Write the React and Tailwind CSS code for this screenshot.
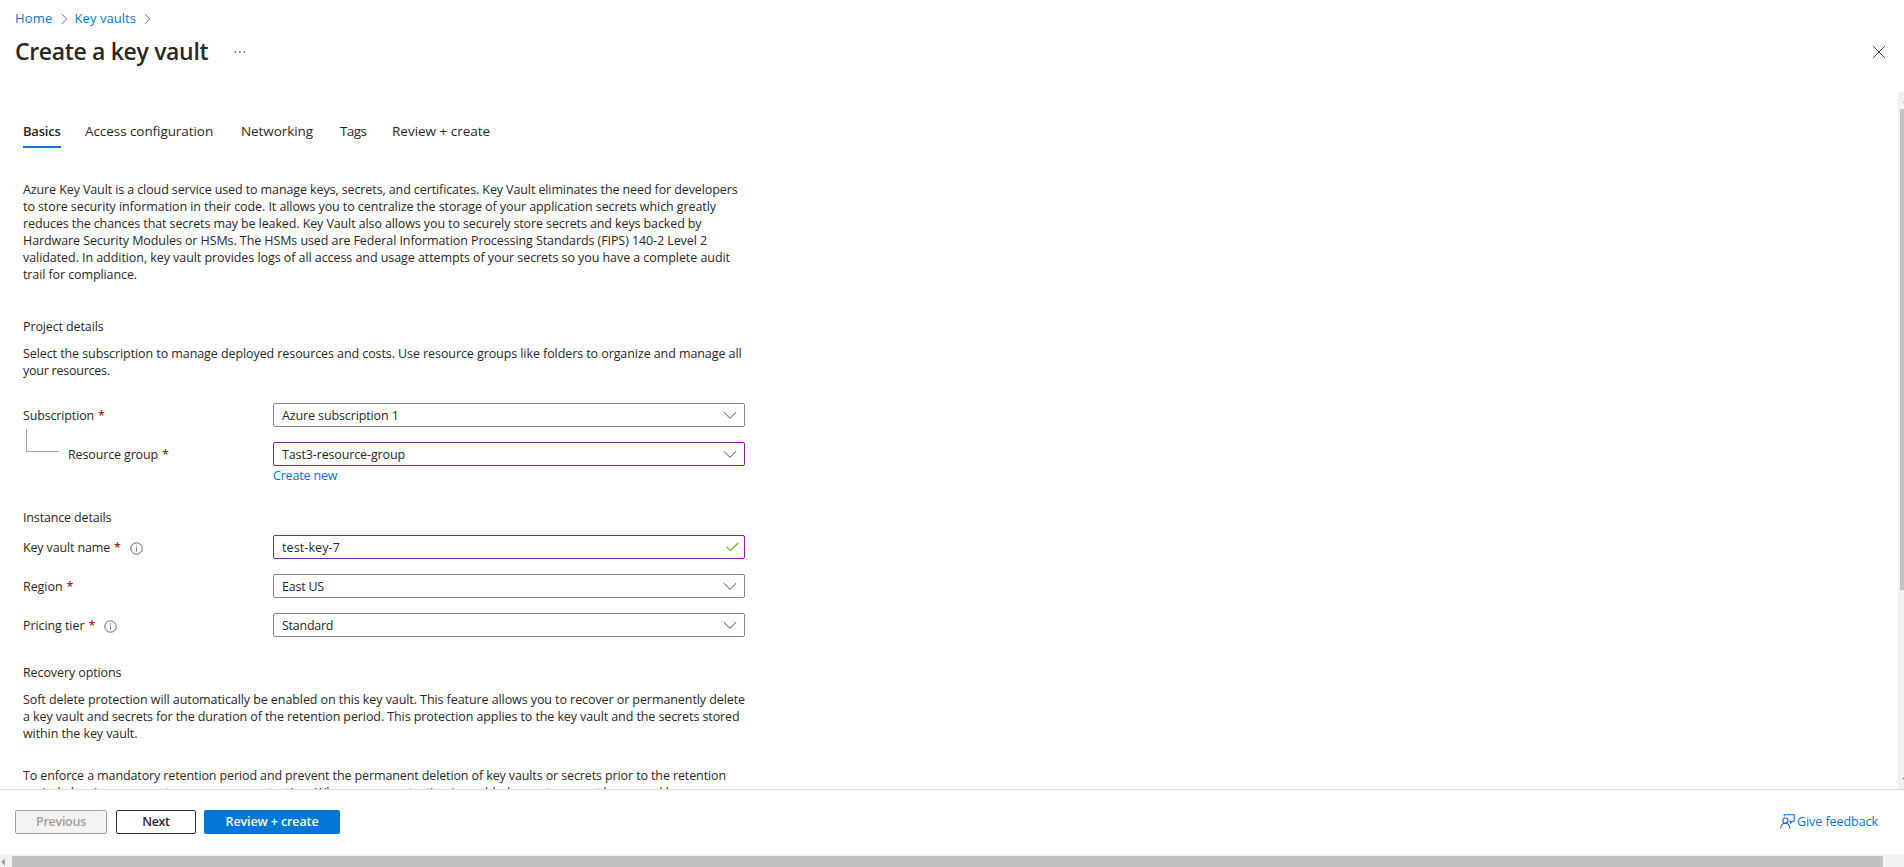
const intro = [
  ['Azure Key Vault is a cloud service used to manage keys, secrets, and certificates. Key Vault eliminates the need for developers', 'tracking-[-0.106px]'],
  ['to store security information in their code. It allows you to centralize the storage of your application secrets which greatly', 'tracking-[-0.080px]'],
  ['reduces the chances that secrets may be leaked. Key Vault also allows you to securely store secrets and keys backed by', 'tracking-[-0.109px]'],
  ['Hardware Security Modules or HSMs. The HSMs used are Federal Information Processing Standards (FIPS) 140-2 Level 2', 'tracking-[-0.085px]'],
  ['validated. In addition, key vault provides logs of all access and usage attempts of your secrets so you have a complete audit', 'tracking-[-0.065px]'],
  ['trail for compliance.', 'tracking-[-0.1px]'],
];

const project = [
  ['Select the subscription to manage deployed resources and costs. Use resource groups like folders to organize and manage all', 'tracking-[-0.083px]'],
  ['your resources.', 'tracking-[-0.24px]'],
];

const recovery = [
  ['Soft delete protection will automatically be enabled on this key vault. This feature allows you to recover or permanently delete', 'tracking-[-0.079px]'],
  ['a key vault and secrets for the duration of the retention period. This protection applies to the key vault and the secrets stored', 'tracking-[-0.094px]'],
  ['within the key vault.', 'tracking-[-0.09px]'],
];

const retention = [
  ['To enforce a mandatory retention period and prevent the permanent deletion of key vaults or secrets prior to the retention', 'tracking-[-0.115px]'],
  ['period elapsing, you can turn on purge protection. When purge protection is enabled, secrets cannot be purged by users', 'tracking-[-0.08px]'],
];

function Lines({ lines, className = '' }) {
  return (
    <p className={`whitespace-nowrap ${className}`}>
      {lines.map(([text, tracking]) => (
        <span key={text} className={`block ${tracking}`}>{text}</span>
      ))}
    </p>
  );
}

function Crumb() {
  return (
    <svg width="7" height="12" viewBox="0 0 7 12" fill="none" stroke="#7a7a7a" strokeWidth="1">
      <path d="M0.9 1 L5.7 6 L0.9 11" />
    </svg>
  );
}

function Chevron() {
  return (
    <svg className="mr-[7.5px]" width="14" height="9" viewBox="0 0 14 9" fill="none" stroke="#4a4a4a" strokeWidth="1">
      <path d="M0.8 1.2 L7 7.3 L13.2 1.2" />
    </svg>
  );
}

function Check() {
  return (
    <svg className="mr-[5px]" width="13" height="10" viewBox="0 0 13 10" fill="none" stroke="#6bb02a" strokeWidth="1.2">
      <path d="M0.6 4.9 L4.4 8.5 L12.4 0.8" />
    </svg>
  );
}

function Info() {
  return (
    <svg className="ml-[9px] mt-[2px]" width="13" height="13" viewBox="0 0 13 13" fill="none">
      <circle cx="6.5" cy="6.5" r="5.7" stroke="#666" strokeWidth="1" />
      <path d="M6.5 5.5 V9.6 M6.5 3.4 V4.5" stroke="#777" strokeWidth="1" />
    </svg>
  );
}

function Star() {
  return <span className="ml-1 w-[7px] text-[12.5px] font-semibold leading-[17px] text-[#a4262c]">*</span>;
}

function Field({ label, labelClass = '', info, value, valueClass, edited, valid, indent }) {
  return (
    <div className="flex h-6 items-center">
      <div className="relative flex h-6 w-[250px] items-center">
        {indent && (
          <span className="absolute -top-[13px] left-[3px] h-[23px] w-[33px] border-b border-l border-[#a6a6a6]" />
        )}
        <label className={`${indent ? 'ml-[45px]' : ''} ${labelClass}`}>{label}</label>
        <Star />
        {info && <Info />}
      </div>
      <div
        className={`flex h-6 w-[472px] items-center justify-between rounded-[2px] border bg-white pl-2 ${
          edited ? 'border-[#881fa3]' : 'border-[#8a8886]'
        }`}
      >
        <span className={valueClass}>{value}</span>
        {valid ? <Check /> : <Chevron />}
      </div>
    </div>
  );
}

function Feedback() {
  return (
    <svg width="15" height="15" viewBox="0 0 15 15" fill="none" stroke="#1f62d6" strokeWidth="1.1">
      <path d="M4.2 2.6 V0.7 H14.2 V7.2 H12.6 L10.4 9.2 V7.2 H9.4" />
      <circle cx="5.4" cy="6.6" r="2.6" />
      <path d="M0.7 14.4 C0.8 11.2 2.6 9.3 5.3 9.3 C8 9.3 9.8 11.2 9.9 14.4" />
    </svg>
  );
}

export default function App() {
  return (
    <div className="flex h-[867px] w-[1904px] flex-col overflow-hidden bg-white font-['Open_Sans',sans-serif] text-[12.5px] leading-[17px] text-[#292827]">
      <header className="flex h-[92px] shrink-0 flex-col pl-[15px]">
        <nav className="mt-[9px] flex h-[19px] items-center text-[13px] text-[#0078d4]">
          <a className="w-[37px] tracking-[0.15px]">Home</a>
          <span className="ml-[8.5px] flex"><Crumb /></span>
          <a className="ml-[7px] w-[61px] whitespace-nowrap tracking-[0.06px]">Key vaults</a>
          <span className="ml-2 flex"><Crumb /></span>
        </nav>
        <div className="flex h-12 items-center">
          <h1 className="w-[219px] whitespace-nowrap pb-[2px] text-[23px] font-semibold leading-8 tracking-[-0.33px]">Create a key vault</h1>
          <svg width="12" height="2" viewBox="0 0 12 2" fill="#555">
            <rect x="0.6" y="0.3" width="1.5" height="1.5" />
            <rect x="5.1" y="0.3" width="1.5" height="1.5" />
            <rect x="9.6" y="0.3" width="1.5" height="1.5" />
          </svg>
          <svg className="ml-auto mr-[19px]" width="12" height="12" viewBox="0 0 12 12" stroke="#333" strokeWidth="1">
            <path d="M0.2 0.2 L11.8 11.8 M11.8 0.2 L0.2 11.8" />
          </svg>
        </div>
      </header>

      <div className="flex h-[697px] shrink-0">
        <main className="h-full w-[1898px] overflow-hidden pl-[23px]">
          <div className="flex h-14 items-start pt-[30px] text-[13.5px] leading-[19px]">
            <span className="h-[26px] w-[38px] border-b-2 border-[#0078d4] text-[13px] font-semibold tracking-[-0.2px]">Basics</span>
            <span className="ml-6 w-[156px] whitespace-nowrap tracking-[-0.07px]">Access configuration</span>
            <span className="w-[99px] tracking-[-0.08px]">Networking</span>
            <span className="w-[52px] tracking-[-0.6px]">Tags</span>
            <span className="whitespace-nowrap tracking-[-0.01px]">Review + create</span>
          </div>

          <Lines lines={intro} className="mt-[33px]" />

          <h2 className="mt-[35px] tracking-[-0.12px]">Project details</h2>
          <Lines lines={project} className="mt-[10px]" />

          <div className="mt-6 flex flex-col gap-[15px]">
            <Field label="Subscription" labelClass="tracking-[-0.15px]" value="Azure subscription 1" valueClass="tracking-[-0.12px]" />
            <Field label="Resource group" labelClass="tracking-[-0.14px]" value="Tast3-resource-group" valueClass="tracking-[-0.128px]" edited indent />
          </div>
          <a className="ml-[250px] mt-px block tracking-[-0.18px] text-[#0078d4]">Create new</a>

          <h2 className="mt-[25px] tracking-[-0.15px]">Instance details</h2>
          <div className="mt-[9px] flex flex-col gap-[15px]">
            <Field label="Key vault name" labelClass="tracking-[-0.15px]" info value="test-key-7" valueClass="tracking-[0.1px]" edited valid />
            <Field label="Region" labelClass="tracking-[-0.06px]" value="East US" valueClass="tracking-[-0.219px]" />
            <Field label="Pricing tier" labelClass="tracking-[-0.08px]" info value="Standard" valueClass="tracking-[-0.25px]" />
          </div>

          <h2 className="mt-[27px] tracking-[-0.1px]">Recovery options</h2>
          <Lines lines={recovery} className="mt-[10px]" />
          <Lines lines={retention} className="mt-[25px]" />
        </main>
        <div className="flex w-[6px] flex-col bg-[#f1f1f1]">
          <span className="mt-[10px] ml-[5px] h-px w-px bg-[#a3a3a3]" />
          <span className="mt-[6px] ml-[2px] h-[481px] w-1 bg-[#c1c1c1]" />
          <span className="mt-auto mb-[10px] ml-[5px] h-px w-px bg-[#505050]" />
        </div>
      </div>

      <footer className="flex h-[65px] shrink-0 border-t border-[#d9d9d9] pl-[15px] pt-5 font-semibold">
        <button className="h-6 w-[92px] rounded-[2px] border border-[#a19f9d] bg-[#f3f2f1] pb-px leading-[17px] tracking-[-0.264px] text-[#a19f9d]">Previous</button>
        <button className="ml-[9px] h-6 w-20 rounded-[2px] border border-[#323130] bg-white pb-px leading-[17px] tracking-[-0.33px]">Next</button>
        <button className="ml-2 h-6 w-[136px] rounded-[2px] bg-[#0078d4] pb-px leading-[17px] tracking-[-0.106px] text-white">Review + create</button>
        <a className="ml-auto mr-[26px] flex h-[23px] items-center font-normal tracking-[-0.06px] text-[#0078d4]">
          <Feedback />
          <span className="ml-[2px]">Give feedback</span>
        </a>
      </footer>

      <div className="flex h-[13px] shrink-0 items-end bg-[#f1f1f1]">
        <svg width="12" height="11" viewBox="0 0 12 11" fill="#a3a3a3">
          <path d="M5 2.5 L5 9.5 L1 6 Z" />
        </svg>
        <span className="h-[11px] w-[1871px] bg-[#c1c1c1]" />
      </div>
    </div>
  );
}
